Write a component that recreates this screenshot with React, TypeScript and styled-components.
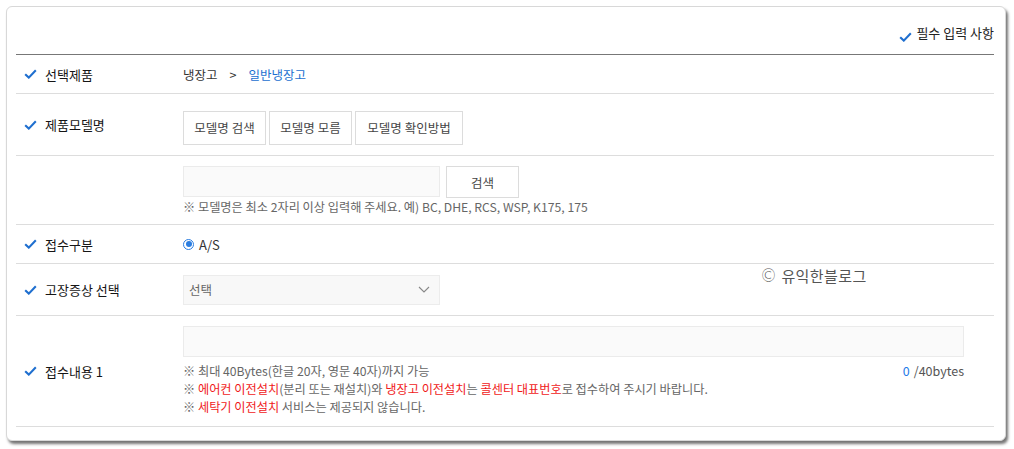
import styled, { createGlobalStyle } from "styled-components"

const Global = createGlobalStyle`
  html, body { margin: 0; padding: 0; background: #fff; }
  body {
    font-family: "Noto Sans CJK KR", "Noto Sans", sans-serif;
    color: #333;
    font-size: 12px;
  }
  * { box-sizing: border-box; }
`

const Page = styled.div`
  padding: 6px 8px 8px 6px;
`

const Card = styled.div`
  position: relative;
  width: 1000px;
  height: 435px;
  border: 1px solid #d8d8d8;
  border-radius: 6px;
  background: #fff;
  box-shadow: 2px 3px 3px rgba(0, 0, 0, 0.55);
  padding: 0 11px 0 9px;
`

const Header = styled.div`
  height: 48px;
  display: flex;
  align-items: flex-end;
  justify-content: flex-end;
  padding-bottom: 12px;
  border-bottom: 1px solid #777;
  font-size: 13px;
  font-weight: 400;
  color: #222;
  gap: 4px;
`

const Row = styled.div<{ $h: number }>`
  display: flex;
  align-items: center;
  min-height: ${(p) => p.$h}px;
  border-bottom: 1px solid #ddd;
`

const Label = styled.div`
  width: 167px;
  flex: none;
  display: flex;
  align-items: center;
  gap: 8px;
  padding-left: 8px;
  font-size: 13px;
  font-weight: 400;
  color: #151515;
`

const Value = styled.div<{ $pad?: string }>`
  flex: 1;
  padding: ${(p) => p.$pad ?? "0"};
  display: flex;
  flex-direction: column;
  font-size: 12.5px;
`

const Crumb = styled.div`
  display: flex;
  gap: 12px;
  color: #333;
`

const Blue = styled.span`
  color: #1a6fd0;
`

const BtnGroup = styled.div`
  display: flex;
  gap: 3px;
`

const GhostBtn = styled.button<{ $w: number; $h?: number }>`
  width: ${(p) => p.$w}px;
  height: ${(p) => p.$h ?? 34}px;
  border: 1px solid #dcdcdc;
  background: #fff;
  font: inherit;
  font-size: 12.5px;
  color: #444;
  padding: 0;
`

const Inline = styled.div`
  display: flex;
  gap: 6px;
`

const TextInput = styled.div<{ $w: string; $h: number }>`
  width: ${(p) => p.$w};
  height: ${(p) => p.$h}px;
  border: 1px solid #ebebeb;
  background: #fafafa;
`

const Note = styled.div`
  font-size: 12.2px;
  color: #666;
  line-height: 18px;
`

const Red = styled.span`
  color: #f01919;
`

const Radio = styled.label`
  display: flex;
  align-items: center;
  gap: 5px;
  font-size: 13px;
  color: #333;
`

const Dot = styled.span`
  width: 11px;
  height: 11px;
  border-radius: 50%;
  border: 1.5px solid #2b7de0;
  display: flex;
  align-items: center;
  justify-content: center;
  &::after {
    content: "";
    width: 6px;
    height: 6px;
    border-radius: 50%;
    background: #2b7de0;
  }
`

const Select = styled.div`
  width: 257px;
  height: 30px;
  border: 1px solid #ececec;
  background: #f8f8f8;
  display: flex;
  align-items: center;
  justify-content: space-between;
  padding: 0 9px 0 5px;
  color: #666;
  font-size: 12.5px;
`

const NoteRow = styled.div`
  display: flex;
  justify-content: space-between;
  width: 781px;
  margin-top: 5px;
`

const Counter = styled.div`
  display: flex;
  gap: 4px;
  font-size: 12.5px;
  color: #555;
  line-height: 18px;
`

const Count = styled.span`
  color: #1f7ae8;
`

const Watermark = styled.div`
  position: absolute;
  left: 753px;
  top: 258px;
  display: flex;
  align-items: center;
  gap: 4px;
  font-size: 15px;
  color: #555;
  letter-spacing: 0.4px;
`

const Copy = styled.span`
  font-family: "DejaVu Sans", sans-serif;
  font-size: 17px;
  font-weight: 300;
`

function Check() {
  return (
    <svg width="13" height="10" viewBox="0 0 13 10" fill="none">
      <path d="M1.2 5.2 L4.8 8.6 L11.8 1.2" stroke="#1f6fcf" strokeWidth="2.1" />
    </svg>
  )
}

function Chevron() {
  return (
    <svg width="12" height="7" viewBox="0 0 12 7" fill="none">
      <path d="M1 1 L6 6 L11 1" stroke="#888" strokeWidth="1.1" />
    </svg>
  )
}

export default function App() {
  return (
    <Page>
      <Global />
      <Card>
        <Header>
          <Check />
          필수 입력 사항
        </Header>

        <Row $h={39}>
          <Label><Check />선택제품</Label>
          <Value>
            <Crumb>
              <span>냉장고</span>
              <span>&gt;</span>
              <Blue>일반냉장고</Blue>
            </Crumb>
          </Value>
        </Row>

        <Row $h={62}>
          <Label><Check />제품모델명</Label>
          <Value $pad="6px 0 0">
            <BtnGroup>
              <GhostBtn $w={83}>모델명 검색</GhostBtn>
              <GhostBtn $w={83}>모델명 모름</GhostBtn>
              <GhostBtn $w={108}>모델명 확인방법</GhostBtn>
            </BtnGroup>
          </Value>
        </Row>

        <Row $h={69}>
          <Label />
          <Value $pad="2px 0 0">
            <Inline>
              <TextInput $w="257px" $h={31} />
              <GhostBtn $w={73} $h={32}>검색</GhostBtn>
            </Inline>
            <Note>※ 모델명은 최소 2자리 이상 입력해 주세요. 예) BC, DHE, RCS, WSP, K175, 175</Note>
          </Value>
        </Row>

        <Row $h={39}>
          <Label><Check />접수구분</Label>
          <Value>
            <Radio><Dot />A/S</Radio>
          </Value>
        </Row>

        <Row $h={52}>
          <Label><Check />고장증상 선택</Label>
          <Value>
            <Select>
              선택
              <Chevron />
            </Select>
          </Value>
        </Row>

        <Row $h={111}>
          <Label><Check />접수내용 1</Label>
          <Value>
            <TextInput $w="781px" $h={31} />
            <NoteRow>
              <Note>※ 최대 40Bytes(한글 20자, 영문 40자)까지 가능</Note>
              <Counter><Count>0</Count>/40bytes</Counter>
            </NoteRow>
            <Note>
              ※ <Red>에어컨 이전설치</Red>(분리 또는 재설치)와 <Red>냉장고 이전설치</Red>는{" "}
              <Red>콜센터 대표번호</Red>로 접수하여 주시기 바랍니다.
            </Note>
            <Note>
              ※ <Red>세탁기 이전설치</Red> 서비스는 제공되지 않습니다.
            </Note>
          </Value>
        </Row>

        <Watermark><Copy>©</Copy>유익한블로그</Watermark>
      </Card>
    </Page>
  )
}
